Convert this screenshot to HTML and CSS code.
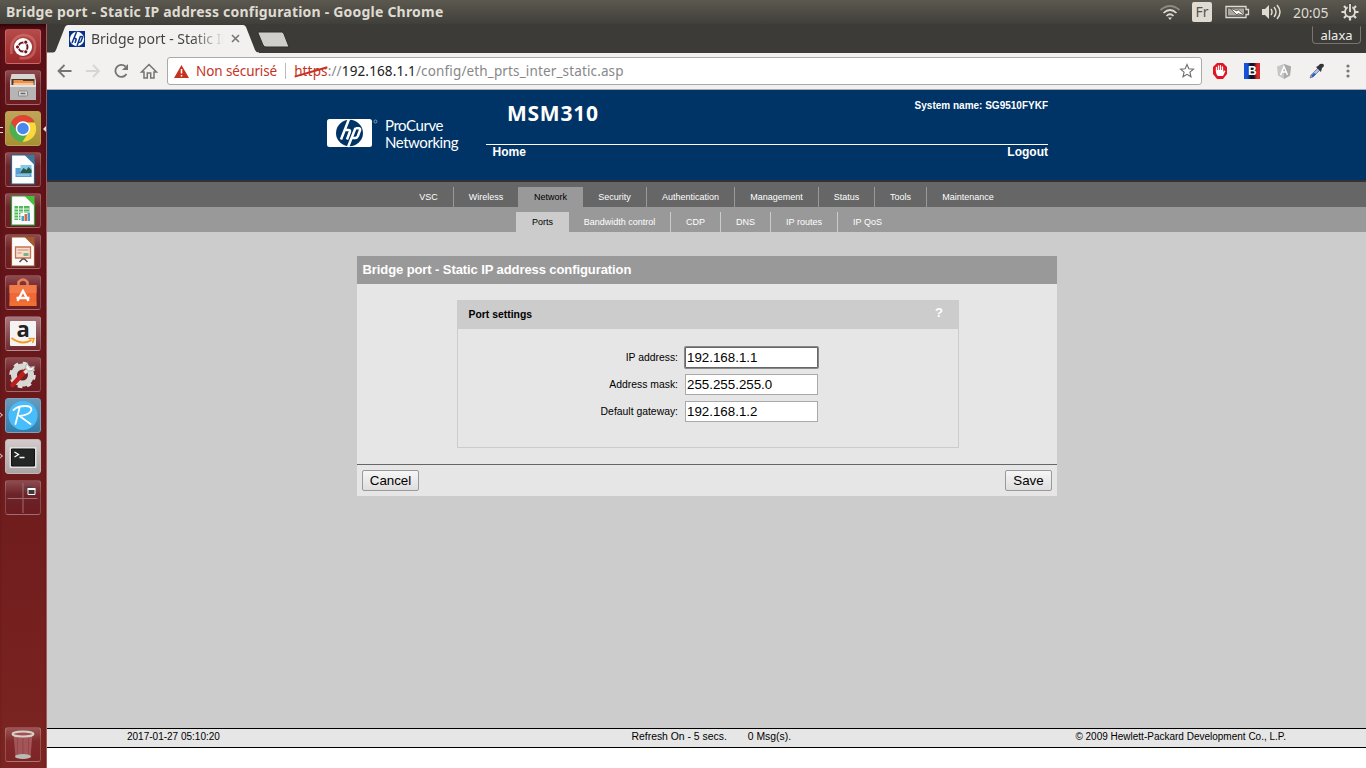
FILE: index.html
```html
<!DOCTYPE html>
<html lang="fr">
<head>
<meta charset="utf-8">
<title>Bridge port - Static IP address configuration</title>
<link rel="stylesheet" href="styles.css">
</head>
<body>
<div class="desktop">
  <header class="menubar">
    <span class="window-title">Bridge port - Static IP address configuration - Google Chrome</span>
    <div class="indicators">
      <svg class="wifi" width="22" height="18" viewBox="0 0 22 18" fill="none" stroke="#dfdbd2" stroke-width="1.7"><path d="M1.5 7Q11-1 20.500 7" stroke="#8d8a82"/><path d="M4.500 10Q11 4 17.500 10M7.500 13Q11 9.500 14.500 13"/><path d="M9 14.500h4l-2 2.500z" fill="#dfdbd2" stroke="none"/></svg>
      <span class="lang">Fr</span>
      <svg class="battery" width="25" height="14" viewBox="0 0 25 14"><path d="M1 1.500h20v3h2.500v5H21v3H1z" fill="none" stroke="#dfdbd2" stroke-width="1.300"/><path d="M3 3.500h16v7H3z" fill="#aaa79f"/><path d="M5 3l7 3 1-1.500 7 6.500-7-2.500-1 1.500z" fill="#fff" stroke="#4b4943" stroke-width=".8"/></svg>
      <svg class="sound" width="21" height="16" viewBox="0 0 21 16"><path d="M1 5h3l4-4v14l-4-4H1z" fill="#dfdbd2"/><path d="M10 5q2 3 0 6M13 3q4 5 0 10M16 1q6 7 0 14" fill="none" stroke="#dfdbd2" stroke-width="1.500"/></svg>
      <span class="clock">20:05</span>
      <svg class="gear" width="18" height="18" viewBox="0 0 18 18" fill="none" stroke="#dfdbd2"><circle cx="9" cy="9" r="5" stroke-width="1.900"/><path d="M9 14v3.500M.5 9H4M14 9h3.500M3 3l2.200 2.200M15 3l-2.200 2.200M3 15l2.200-2.200M15 15l-2.200-2.200" stroke-width="2.200"/><path d="M9 0v8" stroke="#4b4943" stroke-width="4.500"/><path d="M9 1v8" stroke-width="1.900"/></svg>
    </div>
  </header>
  <div class="workspace">
    <nav class="launcher">
      <div class="tile dash"><svg viewBox="0 0 35 35"><path d="M6 25Q4 8 18 6Q32 7 29 22Q26 31 14 29" fill="none" stroke="#dc8d88" stroke-width="2.500" opacity=".45"/><circle cx="17.500" cy="18" r="9" fill="#fff"/><circle cx="17.500" cy="18" r="4.500" fill="none" stroke="#6b1b20" stroke-width="2"/><g fill="#6b1b20" stroke="#fff"><circle cx="12" cy="18" r="2.100"/><circle cx="20.300" cy="13.200" r="2.100"/><circle cx="20.300" cy="22.800" r="2.100"/></g></svg></div>
      <div class="tile"><svg viewBox="0 0 35 35"><path d="M6 4h23l1.500 7v19H4.500V11z" fill="#d8d6d3"/><path d="M6 9h23v7H6z" fill="#4c3529"/><path d="M8 10h9l1 1h10v5H8z" fill="#ed914f"/><path d="M8 13h20v3H8z" fill="#f8c28e"/><path d="M4.500 15h26v15h-26z" fill="#b6b5b3"/><path d="M4.500 15h26v2h-26z" fill="#e4e3e1"/><rect x="13" y="21" width="9" height="5" rx="1" fill="#ddd" stroke="#888"/><path d="M15 23.500h5" stroke="#666" stroke-width="1.500"/></svg></div>
      <div class="tile chrome focused"><svg viewBox="0 0 35 35"><circle cx="17.500" cy="17.500" r="13.300" fill="#4caf50"/><path d="M5.500 11.500A13.300 13.300 0 0 1 29.500 11.500H17.500L12 20.500z" fill="#e14335"/><path d="M29.300 11.500A13.300 13.300 0 0 1 17 30.800L23.500 20.500 21 11.500z" fill="#fdd63b"/><circle cx="17.500" cy="17.500" r="6.500" fill="#4b88ed" stroke="#fff" stroke-width="1.500"/></svg><i class="pip"></i></div>
      <div class="tile"><svg viewBox="0 0 35 35"><path d="M6 3h15l8 8v21H6z" fill="#fcfcfc" stroke="#28658a" stroke-width="1.200"/><path d="M19 3h10v10z" fill="#3a7aa0"/><path d="M10 16h16v9H10z" fill="#57a1d2"/><path d="M15 13h11v8H15z" fill="#83c8e8"/><path d="M15 20l3-4 3 2 2-3 3 3v3H15z" fill="#285b41"/><path d="M11 23h13" stroke="#b9e0ef"/></svg></div>
      <div class="tile"><svg viewBox="0 0 35 35"><path d="M6 3h15l8 8v21H6z" fill="#fcfcfc" stroke="#2ca43c" stroke-width="1.200"/><path d="M19 3h10v10z" fill="#45c13d"/><path d="M9 13h15v14H9z" fill="#4fb95a"/><path d="M9 16h15M9 19h15M9 22h15M9 25h15M13 13v14M18 13v14" stroke="#edf9ee"/><path d="M15 20h10v8H15z" fill="#fff"/><path d="M16 23h2.500v5H16z" fill="#4b9fce"/><path d="M19 21h2.500v7H19z" fill="#dd6745"/><path d="M22 20h2.500v8H22z" fill="#4b9fce"/></svg></div>
      <div class="tile"><svg viewBox="0 0 35 35"><path d="M6 3h15l8 8v21H6z" fill="#fcfcfc" stroke="#9c5428" stroke-width="1.200"/><path d="M19 3h10v10z" fill="#a4592c"/><path d="M10 13h15v11H10z" fill="#f6ddce" stroke="#c87250" stroke-width="1.300"/><path d="M12 16h11M12 19h4" stroke="#d48a6d"/><path d="M18 19h5v3h-5z" fill="#7bb680"/><path d="M14 28l3-3h2l3 3" fill="none" stroke="#5e4940" stroke-width="1.500"/></svg></div>
      <div class="tile"><svg viewBox="0 0 35 35"><path d="M13 14V7q4.500-5 9 0v7" fill="none" stroke="#e88259" stroke-width="2.500"/><path d="M4 10h27v21H4z" fill="#ee6937"/><path d="M4 10h27v8H4z" fill="#f07a48"/><path d="M12 26l5.500-10 5.500 10M11 23h13" fill="none" stroke="#fff" stroke-width="2.300"/><path d="M4 27h27v4H4z" fill="#ef752d" opacity=".7"/></svg></div>
      <div class="tile amazon"><svg viewBox="0 0 35 35"><rect x="4.500" y="5" width="26" height="25" rx="1" fill="#f4f4f4"/><text class="amazon-letter" x="11" y="21">a</text><path d="M6 22q11 8 20 2" fill="none" stroke="#f7981d" stroke-width="2"/><path d="M23 22.500h5.500L27 27" fill="none" stroke="#f7981d" stroke-width="1.500"/></svg></div>
      <div class="tile"><svg viewBox="0 0 35 35"><circle cx="17" cy="18" r="8.500" fill="none" stroke="#d7d7d4" stroke-width="6"/><circle cx="17" cy="18" r="12" fill="none" stroke="#dededb" stroke-width="2.500" stroke-dasharray="4.700 4.725"/><path d="M7 28L20 14" stroke="#bd1d1c" stroke-width="4.500" stroke-linecap="round"/><path d="M19 16l5-5" stroke="#e3e3df" stroke-width="3.500"/><path d="M22 6q-4 5 1 8 6 0 6-5l-4 2-2-2z" fill="#f4f4f1" stroke="#969696" stroke-width=".7"/></svg></div>
      <div class="tile remarkable"><svg viewBox="0 0 35 35"><circle cx="17.500" cy="17.500" r="14.500" fill="#48bdfb"/><path d="M8 12Q12 8 20 8 26 8 26 12 24 17 14 18L25 26M14 10L10 26" fill="none" stroke="#fff" stroke-width="1.800" stroke-linecap="round"/></svg><i class="arrow"></i></div>
      <div class="tile terminal"><svg viewBox="0 0 35 35"><rect x="4" y="8" width="27" height="21" rx="1" fill="#e0e0dd"/><path d="M6 10h23v17H6z" fill="#232625" stroke="#111"/><path d="M9 13l4 2.500-4 2.500M14 18.500h5" fill="none" stroke="#fff" stroke-width="1.300"/></svg><i class="arrow"></i></div>
      <div class="tile"><svg viewBox="0 0 35 35"><path d="M17.500 3v30M2 18.500h30" stroke="#9c6e72"/><path d="M20 7.500h7" stroke="#444" stroke-width="2"/><path d="M22.500 9.500h7v5h-7z" fill="#3d3938" stroke="#fff"/><path d="M22 9h8" stroke="#fff" stroke-width="2"/></svg></div>
      <div class="tile trash"><svg viewBox="0 0 35 35"><path d="M8 7h19l-2 23H10z" fill="#b66d70" opacity=".65"/><path d="M12 11v17M17.500 11v18M23 11v17" stroke="#984349"/><ellipse cx="17.500" cy="7" rx="10.500" ry="2.500" fill="#a65054" stroke="#d4d3ca" stroke-width="2"/><ellipse cx="17.500" cy="29.500" rx="8" ry="2.500" fill="#b9bab4"/></svg></div>
    </nav>

    <main class="browser">
      <div class="tabstrip">
        <svg class="tab-shape" width="245" height="29" viewBox="0 0 245 29"><path d="M0 29V28.500H6Q8 28.500 9 26L18 3Q19 1 21 1H196Q198 1 199 3L208 26Q209 28.500 212 28.500V29z" fill="#f2f1f0"/><path d="M212 8H235Q236 8 237 10L242 23H219Q217 23 216 21L211 9Q210.500 8 212 8z" fill="#cfcecb" stroke="#302f2b"/></svg>
        <div class="tab">
          <svg width="16" height="16" viewBox="0 0 16 16"><path d="M0 0h16v16H0z" fill="#08318c"/><circle cx="8" cy="8" r="7.200" fill="#fff"/><path d="M7.500 1L3 12M4.500 7.500h2q1 0 .5 1.500L6 12M11.500 5L8 15M11.500 5.500h1.300q1 0 .5 1.500L12 10.500q-.5 1-2.500 1" fill="none" stroke="#08318c" stroke-width="1.500"/></svg>
          <span class="tab-label">Bridge port - Static IP</span>
          <svg class="close" width="9" height="9" viewBox="0 0 9 9"><path d="M1 1l7 7M8 1L1 8" stroke="#777" stroke-width="1.600"/></svg>
        </div>
        <span class="profile">alaxa</span>
      </div>
      <div class="toolbar">
        <svg class="navicons" width="110" height="18" viewBox="0 0 110 18" fill="none" stroke="#747472" stroke-width="1.800"><path d="M17.500 9H5M10.500 3L4.500 9l6 6"/><path d="M32 9h13M39 3l6 6-6 6" stroke="#d6d5d3"/><path d="M72.500 12A6 6 0 1 1 71.500 4.500"/><path d="M74 2v6h-6z" fill="#747472" stroke="none"/><path d="M87.500 10H90v6h3.300v-5h3.400v5H100v-6h2.500L95 2.500z" stroke-width="1.500"/></svg>
        <div class="address">
          <svg width="15" height="13" viewBox="0 0 15 13"><path d="M7.500 0L15 13H0z" fill="#c5331f"/><path d="M7.500 4v4.500M7.500 10v1.500" stroke="#fff" stroke-width="1.500"/></svg>
          <span class="insecure">Non sécurisé</span><i class="divider"></i>
          <span class="url"><span class="scheme">https</span>://<b>192.168.1.1</b>/config/eth_prts_inter_static.asp</span>
          <svg class="star" width="16" height="16" viewBox="0 0 16 16"><path d="M8 1.500l1.800 4.300 4.700.4-3.600 3 1.100 4.600L8 11.300l-4 2.500 1.100-4.600-3.600-3 4.700-.4z" fill="none" stroke="#6c6c6c" stroke-width="1.100"/></svg>
        </div>
        <div class="extensions">
          <svg width="16" height="16" viewBox="0 0 16 16"><path d="M5 0h6l4 4v7l-4 5H5l-4-5V4z" fill="#e11524"/><path d="M4.500 8V4.500M6.500 8V3M8.500 8V2.700M10.500 8V4" stroke="#fff" stroke-width="1.300" stroke-linecap="round"/><path d="M3.800 7h7.500v2l1-1.500 1.200.5-2.500 5H6q-2-1-2.200-6z" fill="#fff"/></svg>
          <svg width="16" height="16" viewBox="0 0 16 16"><defs><linearGradient id="flag"><stop offset="0" stop-color="#1452db"/><stop offset=".2" stop-color="#1452db"/><stop offset=".42" stop-color="#101329"/><stop offset=".6" stop-color="#101329"/><stop offset=".82" stop-color="#d52a2d"/></linearGradient></defs><path d="M0 0h16v16H0z" fill="url(#flag)"/><text class="ext-letter" x="4" y="12">B</text></svg>
          <svg width="16" height="16" viewBox="0 0 16 16"><path d="M8 1l7 2.500-1 9L8 16l-6-3.500-1-9z" fill="#c6c6c6"/><path d="M8 1l7 2.500-1 9L8 16z" fill="#aaa"/><path d="M4.500 12L8 3.500l3.500 8.500M6 9h4" fill="none" stroke="#fff" stroke-width="1.400"/></svg>
          <svg width="17" height="16" viewBox="0 0 17 16"><path d="M2 15l1-3 7-7 2 2-7 7z" fill="#a9c1ed" stroke="#777" stroke-width=".8"/><path d="M3 13l3-3 2 1-3 3z" fill="#2457d6"/><path d="M8 4l2-1 2-2q3-1 4 1 0 2-2 3l-1 4z" fill="#33353d"/></svg>
          <svg width="4" height="14" viewBox="0 0 4 14" fill="#777"><circle cx="2" cy="2" r="1.600"/><circle cx="2" cy="7" r="1.600"/><circle cx="2" cy="12" r="1.600"/></svg>
        </div>
      </div>

      <section class="page">
        <div class="masthead">
          <div class="brand">
            <svg width="51" height="29" viewBox="0 0 51 29"><rect width="45" height="28" rx="2.500" fill="#fff"/><ellipse cx="22.500" cy="14" rx="13.500" ry="13.200" fill="#036"/><path d="M22 0L14 20.500M18 11h3.500q2 0 1.300 2L20 20.500M28.500 9L21 28M28.500 9.300h3q2.200 0 1.400 2.200l-2 5.500q-.8 2-3 2h-3" fill="none" stroke="#fff" stroke-width="2.500"/><circle cx="48.500" cy="2.500" r="1.500" fill="none" stroke="#a1b1c9" stroke-width=".8"/></svg>
            <div class="brand-name">ProCurve<br>Networking</div>
          </div>
          <div class="device">
            <div class="device-top"><span class="model">MSM310</span><span class="system">System name: SG9510FYKF</span></div>
            <div class="links"><span>Home</span><span>Logout</span></div>
          </div>
        </div>
        <nav class="mainnav"><span class="vsc">VSC</span><span class="wireless">Wireless</span><span class="current network">Network</span><span class="security">Security</span><span class="auth">Authentication</span><span class="management">Management</span><span class="status">Status</span><span class="tools">Tools</span><span class="maintenance">Maintenance</span></nav>
        <nav class="subnav"><span class="current ports">Ports</span><span class="bandwidth">Bandwidth control</span><span class="cdp">CDP</span><span class="dns">DNS</span><span class="routes">IP routes</span><span class="qos">IP QoS</span></nav>
        <div class="content">
          <form class="panel">
            <h1>Bridge port - Static IP address configuration</h1>
            <div class="settings">
              <div class="settings-head"><span>Port settings</span><span class="help">?</span></div>
              <div class="fields">
                <label for="ip">IP address:</label><input class="active" id="ip" value="192.168.1.1">
                <label for="mask">Address mask:</label><input id="mask" value="255.255.255.0">
                <label for="gw">Default gateway:</label><input id="gw" value="192.168.1.2">
              </div>
            </div>
            <div class="actions"><button class="cancel" type="button">Cancel</button><button class="save" type="button">Save</button></div>
          </form>
        </div>
        <footer class="footer"><span>2017-01-27 05:10:20</span><span class="refresh"><span>Refresh On - 5 secs.</span><span>0 Msg(s).</span></span><span class="copyright">© 2009 Hewlett-Packard Development Co., L.P.</span></footer>
      </section>
    </main>
  </div>
</div>
</body>
</html>
```
FILE: styles.css
```css
* { box-sizing: border-box; }
body { margin: 0; background: #fff; font-family: "Liberation Sans", Arial, sans-serif; }
svg { display: block; flex: none; }
.desktop { width: 1366px; height: 768px; overflow: hidden; }
.menubar { height: 24px; display: flex; justify-content: space-between; padding: 0 7px 0 6px; background: linear-gradient(#5b594f, #403f3a); color: #dfdbd2; font-family: "Noto Sans", sans-serif; }
.window-title { font-size: 14px; line-height: 24px; font-weight: 700; letter-spacing: .21px; white-space: nowrap; }
.indicators { display: flex; align-items: center; }
.lang { width: 20px; height: 20px; margin-left: 11px; background: #dfdbd2; border-radius: 2px; color: #55534c; font-size: 14px; line-height: 20px; text-align: center; }
.battery { margin-left: 13px; }
.sound { margin-left: 11px; }
.clock { width: 37px; margin-left: 11px; font-size: 14px; letter-spacing: -.1px; }
.gear { margin: 0 0 0 11px; }
.workspace { display: flex; height: 744px; }
.launcher { width: 47px; padding: 5px 0 6px 5px; background: linear-gradient(#580f15, #651519 35%, #7c2522); border-right: 1px solid #a35a59; display: flex; flex-direction: column; gap: 6px; box-shadow: inset 0 5px 5px -3px #260406; }
.tile { position: relative; flex: none; width: 36px; height: 35px; border: 1px solid #ffffff30; border-radius: 3px; background: linear-gradient(#8d4b50, #6d2429 40%, #6b1c20); }
.tile svg { width: 36px; height: 35px; margin: -1px; overflow: visible; }
.dash { background: linear-gradient(#b64b49, #9c282a); }
.chrome { background: linear-gradient(#c0a559, #a79032); border-color: #bba35a; }
.amazon { background: linear-gradient(#a8787c, #70292d); }
.remarkable { background: linear-gradient(#689bbd, #347eab); border-color: #81a1b8; }
.terminal { background: linear-gradient(#d3cbcb, #aaa3a3); border-color: #c1b7b7; }
.trash { margin-top: auto; background: linear-gradient(#9a5553, #80292a 40%, #7d2425); }
.amazon-letter { font: bold 22px/1 "Open Sans", sans-serif; fill: #222; }
.pip { position: absolute; right: -6px; top: 14px; border: 3px solid transparent; border-right-color: #e5dcdc; border-left: 0; }
.focused::before { content: ""; position: absolute; left: -6px; top: 15px; width: 3px; height: 4px; border-top: 1px solid #e5dcdc; border-bottom: 1px solid #e5dcdc; }
.arrow { position: absolute; left: -8px; top: 14px; width: 4px; height: 4px; border: solid #d0babb; border-width: 1px 1px 0 0; transform: rotate(45deg); }
.browser { flex: 1; min-width: 0; display: flex; flex-direction: column; }
.tabstrip { position: relative; height: 29px; display: flex; justify-content: space-between; background: #3c3b37; }
.tab-shape { position: absolute; left: 0; top: 0; }
.tab { position: relative; display: flex; align-items: center; width: 195px; padding-left: 22px; }
.tab-label { width: 132px; margin-left: 6px; font: 14px/28px "Noto Sans", sans-serif; letter-spacing: -.05px; white-space: nowrap; overflow: hidden; color: transparent; background: linear-gradient(90deg, #41403c 76%, #f2f1f0 102%); background-clip: text; }
.close { margin-left: 8px; }
.profile { width: 49px; height: 18px; margin: 2px 5px 0 0; border: 1px solid #77756e; border-top-color: #3c3b37; border-radius: 0 0 4px 4px; color: #eeeeec; font: 13px/17px "Noto Sans", sans-serif; text-align: center; }
.toolbar { height: 37px; padding: 4px 15px 0 7px; display: flex; background: #f2f1f0; border-bottom: 1px solid #a9adb3; }
.navicons { margin: 5px 0 0; }
.address { width: 1035px; height: 28px; margin-left: 3px; padding: 0 6px; border: 1px solid #aaa9a8; border-radius: 3px; background: #fff; display: flex; align-items: center; font: 13.500px "Noto Sans", sans-serif; }
.insecure { margin-left: 7px; color: #c5331f; letter-spacing: -.1px; white-space: nowrap; }
.divider { width: 1px; height: 16px; margin: 0 8px; background: #bbb; }
.url { color: #888; white-space: nowrap; letter-spacing: .14px; }
.url b { color: #222; font-weight: 400; }
.scheme { position: relative; color: #c5331f; }
.scheme::after { content: ""; position: absolute; left: 0; right: 0; top: 9px; height: 2px; background: #c5331f; transform: rotate(-16deg); }
.star { margin-left: auto; }
.extensions { display: flex; align-items: center; height: 28px; margin-left: 10px; gap: 16px; }
.extensions svg:last-child { margin-left: 5px; }
.ext-letter { font: bold 12px "Liberation Sans", sans-serif; fill: #fff; }
.page { flex: 1; display: flex; flex-direction: column; }
.masthead { height: 92px; padding-left: 280px; display: flex; background: #036; border-bottom: 2px solid #333; color: #fff; }
.brand { width: 159px; padding-top: 29px; display: flex; }
.brand-name { margin: -2px 0 0 7px; font: 15px/17px Lato, sans-serif; letter-spacing: -.45px; white-space: nowrap; }
.device { width: 562px; }
.device-top { height: 55px; display: flex; justify-content: space-between; border-bottom: 1px solid #fff; }
.model { margin: 8px 0 0 21px; font: bold 21px/30px "Open Sans", sans-serif; letter-spacing: .75px; }
.system { margin-top: 10px; font: bold 10px/12px "Liberation Sans", sans-serif; }
.links { display: flex; justify-content: space-between; padding-left: 6.500px; font-size: 12px; line-height: 14px; font-weight: 700; }
.mainnav, .subnav { height: 25px; padding-top: 5px; display: flex; font-size: 9px; line-height: 20px; color: #fff; text-align: center; white-space: nowrap; }
.mainnav { padding-left: 357px; background: #666; }
.subnav { padding-left: 469px; background: #999; }
.mainnav span { border-right: 1px solid #999; }
.subnav span { border-right: 1px solid #ccc; }
.mainnav .current { background: #999; color: #000; }
.subnav .current { background: #ccc; color: #000; }
.mainnav .current, .subnav .current { padding-left: 1px; }
.mainnav .wireless, .mainnav .maintenance, .subnav .qos { border-right: 0; }
.vsc { width: 50px; } .wireless { width: 64px; } .network { width: 65px; }
.security { width: 64px; } .auth { width: 88px; } .management { width: 84px; }
.status { width: 56px; } .tools { width: 52px; } .maintenance { width: 82px; }
.ports { width: 53px; } .bandwidth { width: 102px; } .cdp, .dns { width: 50px; }
.routes { width: 67px; } .qos { width: 59px; }
.content { height: 496px; padding: 24px 0 0 310px; background: #ccc; }
.panel { width: 700px; height: 240px; background: #e6e6e6; }
.panel h1 { height: 28px; margin: 0; padding-left: 5.500px; background: #999; color: #fff; font-size: 13px; letter-spacing: -.09px; line-height: 28px; }
.settings { width: 502px; height: 148px; margin: 16px 0 16px 100px; border: 1px solid #ccc; }
.settings-head { height: 28px; padding: 0 15px 0 10.500px; display: flex; justify-content: space-between; background: #ccc; font-size: 10.400px; line-height: 27px; font-weight: 700; }
.help { color: #fff; font-size: 13px; line-height: 24px; }
.fields { display: grid; grid-template-columns: 220px 133px; grid-auto-rows: 21px; column-gap: 7px; row-gap: 6px; padding-top: 18px; font-size: 10.400px; line-height: 21px; text-align: right; }
.fields input { width: 133px; height: 21px; border: 1px solid #a9a9a9; border-radius: 0; padding: 1px; background: #fff; color: #000; font: 13.333px "Liberation Sans", sans-serif; outline: 0; }
.fields .active { border-color: #666; box-shadow: 0 0 0 1px #888; border-radius: 1px; }
.actions { height: 32px; display: flex; justify-content: space-between; padding: 5px; border-top: 1px solid #666; }
.actions button { height: 21px; padding: 0; border: 1px solid #999; border-radius: 2px; background: linear-gradient(#f6f6f6, #dedede); color: #000; font: 13.333px "Liberation Sans", sans-serif; }
.cancel { width: 57px; } .save { width: 47px; }
.footer { height: 20px; display: grid; grid-template-columns: 504px auto 1fr; padding: 0 80px; border: solid #000; border-width: 1px 0; background: #e6e6e6; font-size: 10px; line-height: 16px; white-space: nowrap; }
.refresh { display: flex; gap: 21px; font-size: 10.400px; padding-left: .5px; }
.copyright { text-align: right; }
```
